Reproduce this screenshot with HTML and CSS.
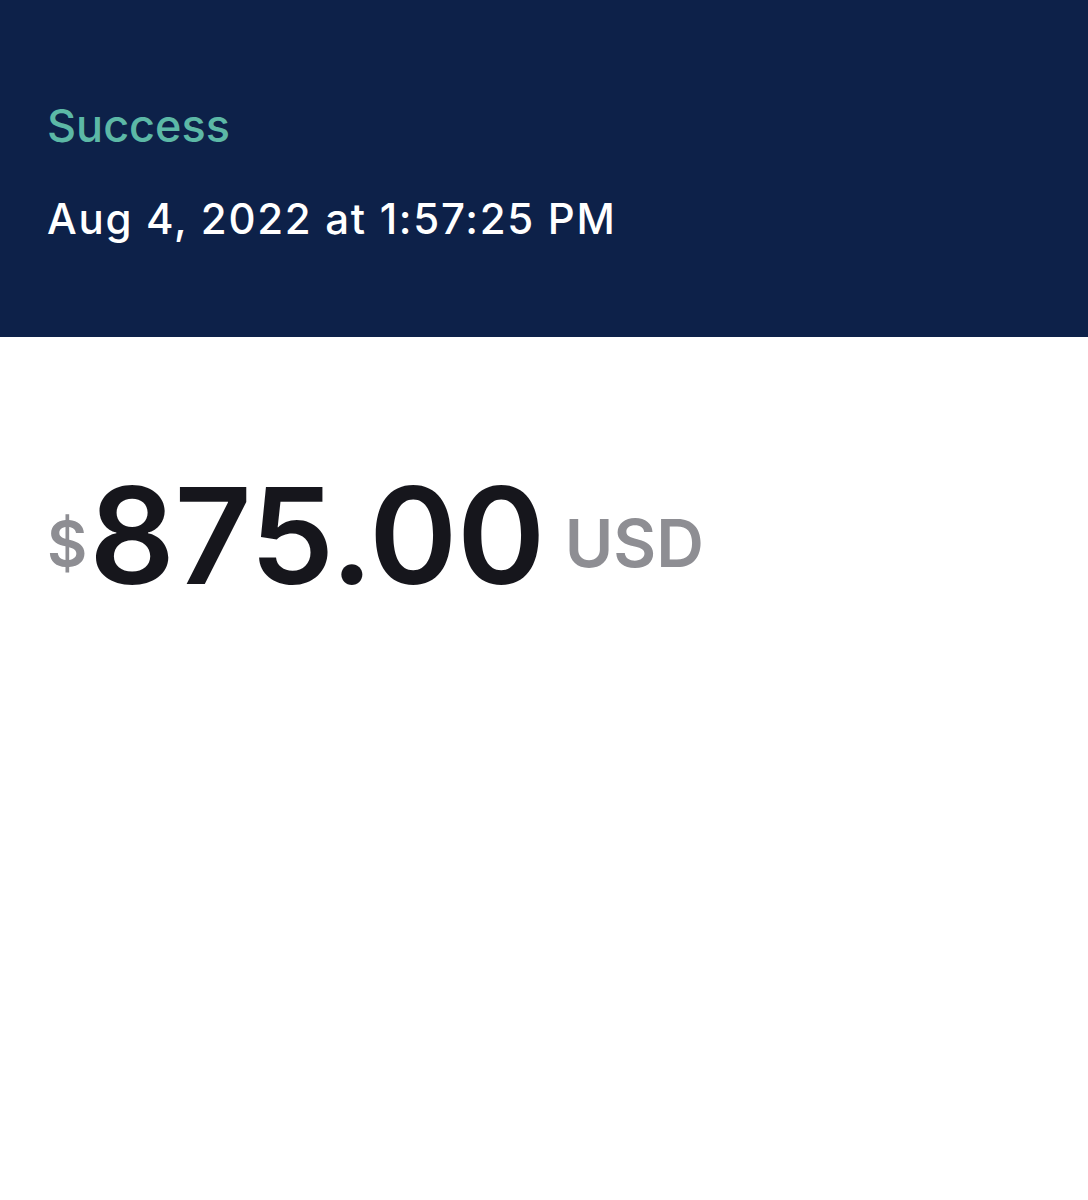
FILE: index.html
```html
<!DOCTYPE html>
<html lang="en">
<head>
    <meta charset="UTF-8">
    <meta name="viewport" content="width=device-width, initial-scale=1.0">
    <title>Payment</title>
    <link rel="stylesheet" href="styles.css">
</head>
<body>
    <header class="status-bar">
        <p class="status">Success</p>
        <p class="date">Aug 4, 2022 at 1:57:25 PM</p>
    </header>

    <main class="amount-box">
        <div class="amount">
            <span class="currency-sign">$</span>
            <span class="value">875.00</span>
            <span class="currency-code">USD</span>
        </div>
    </main>
</body>
</html>
```

FILE: styles.css
```css
/* General Styles */
body {
    font-family: Inter, "Noto Sans", sans-serif;
    margin: 0;
    padding: 0;
    background-color: #ffffff;
}
.status-bar {
    background-color: #0d2149;
    height: 337px;
    box-sizing: border-box;
    padding: 96px 47px 0;
}
.status-bar p {
    margin: 0;
}
.status {
    color: #5cb8a6;
    font-size: 45px;
    font-weight: 500;
    line-height: 60px;
}
.date {
    color: #ffffff;
    font-size: 42px;
    font-weight: 500;
    letter-spacing: 1.7px;
    line-height: 60px;
    margin-top: 33px !important;
}
.amount-box {
    padding: 128px 47px 0;
}
.amount {
    display: flex;
    align-items: center;
    height: 140px;
}
.currency-sign {
    color: #8e8e93;
    font-size: 62px;
    font-weight: 600;
    padding-top: 16px;
}
.value {
    color: #16161c;
    font-size: 134px;
    font-weight: 600;
    letter-spacing: -0.5px;
    margin-left: 2px;
}
.currency-code {
    color: #8e8e93;
    font-size: 66px;
    font-weight: 600;
    margin-left: 20px;
    padding-top: 16px;
}
```
